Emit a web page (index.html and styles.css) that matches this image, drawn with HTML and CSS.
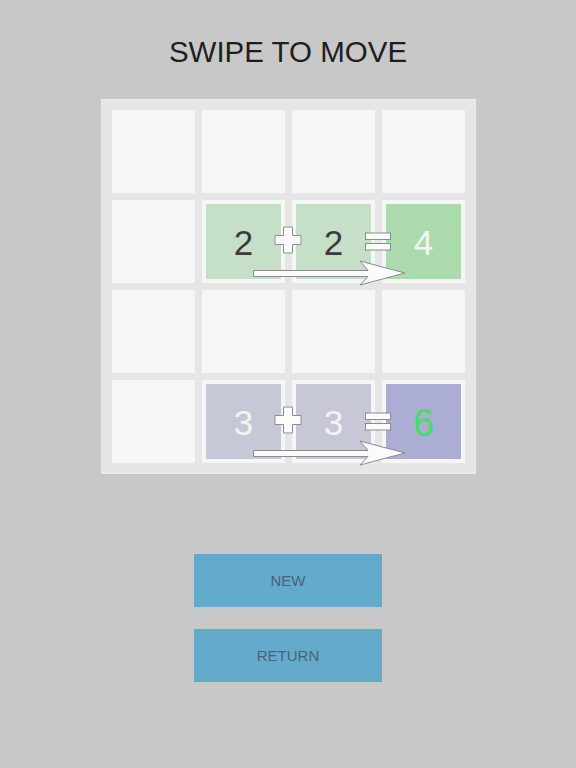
FILE: index.html
```html
<!DOCTYPE html>
<html>
    <head>
        <meta charset="UTF-8">
        <title>Swipe to move</title>
        <link rel="stylesheet" href="styles.css">
    </head>

    <body>
        <h1>SWIPE TO MOVE</h1>

        <div class="board">
            <div class="row">
                <div class="cell"></div>
                <div class="cell"></div>
                <div class="cell"></div>
                <div class="cell"></div>
            </div>
            <div class="row">
                <div class="cell"></div>
                <div class="cell"><div class="tile green dark-num">2</div></div>
                <div class="cell"><div class="tile green dark-num">2</div></div>
                <div class="cell"><div class="tile green-sum light-num">4</div></div>
                <!-- plus / equals / arrow over the last three cells -->
                <svg class="hint" viewBox="0 0 263 83" width="263" height="83">
                    <path class="sign" d="M81.5 27H90.5V35.5H99V44.5H90.5V53H81.5V44.5H73V35.5H81.5Z"/>
                    <rect class="sign" x="163.5" y="33" width="25" height="6.5"/>
                    <rect class="sign" x="163.5" y="43.5" width="25" height="6.5"/>
                    <path class="sign" d="M51.5 70.5H166L158 61L203 73L158 85L166 76.5H51.5Z"/>
                </svg>
            </div>
            <div class="row">
                <div class="cell"></div>
                <div class="cell"></div>
                <div class="cell"></div>
                <div class="cell"></div>
            </div>
            <div class="row">
                <div class="cell"></div>
                <div class="cell"><div class="tile purple light-num">3</div></div>
                <div class="cell"><div class="tile purple light-num">3</div></div>
                <div class="cell"><div class="tile purple-sum big-num">6</div></div>
                <svg class="hint" viewBox="0 0 263 83" width="263" height="83">
                    <path class="sign" d="M81.5 27H90.5V35.5H99V44.5H90.5V53H81.5V44.5H73V35.5H81.5Z"/>
                    <rect class="sign" x="163.5" y="33" width="25" height="6.5"/>
                    <rect class="sign" x="163.5" y="43.5" width="25" height="6.5"/>
                    <path class="sign" d="M51.5 70.5H166L158 61L203 73L158 85L166 76.5H51.5Z"/>
                </svg>
            </div>
        </div>

        <div class="menu">
            <button class="menu-btn">NEW</button>
            <button class="menu-btn">RETURN</button>
        </div>
    </body>
</html>
```

FILE: styles.css
```css
* {
    box-sizing: border-box;
}

body {
    margin: 0;
    padding-top: 34px;
    background-color: #c8c8c8;
    font-family: "Liberation Sans", Arial, sans-serif;
    display: flex;
    flex-direction: column;
    align-items: center;
}

h1 {
    margin: 0 0 29px;
    font-size: 29.5px;
    line-height: 36px;
    font-weight: normal;
    color: #1e1e1e;
}

/* 4x4 board */
.board {
    display: flex;
    flex-direction: column;
    gap: 7px;
    padding: 10px 10px 10px;
    background-color: #e6e6e6;
    border: 1px solid #ececec;
    margin-left: 1px;
}

.row {
    display: grid;
    grid-template-columns: repeat(4, 83px);
    grid-template-rows: 83px;
    column-gap: 7px;
}

/* every item of a row sits on the one grid line, so the hint can overlap the cells */
.row > * {
    grid-row: 1;
}

.cell:nth-child(1) { grid-column: 1; }
.cell:nth-child(2) { grid-column: 2; }
.cell:nth-child(3) { grid-column: 3; }
.cell:nth-child(4) { grid-column: 4; }

.cell {
    background-color: #f6f6f6;
    padding: 4px;
}

.tile {
    width: 100%;
    height: 100%;
    display: flex;
    justify-content: center;
    align-items: center;
    padding-top: 3px;
    font-size: 35px;
}

.green {
    background-color: #c6dfc7;
}

.green-sum {
    background-color: #abdbad;
}

.purple {
    background-color: #c7c8d7;
}

.purple-sum {
    background-color: #acadd5;
}

.dark-num {
    color: #3b3b3b;
}

.light-num {
    color: #f3f3f3;
}

.big-num {
    font-size: 38px;
    color: #3ee35a;
}

.hint {
    grid-column: 2 / span 3;
    display: block;
    overflow: visible;
}

.sign {
    fill: #fbfbfb;
    stroke: #8c8c8c;
    stroke-width: 1;
}

.menu {
    display: flex;
    flex-direction: column;
    gap: 22px;
    margin-top: 80px;
}

.menu-btn {
    width: 188px;
    height: 53px;
    border: none;
    background-color: #64aacb;
    color: #4a6477;
    font-family: "Liberation Sans", Arial, sans-serif;
    font-size: 15px;
    padding: 0;
}
```
